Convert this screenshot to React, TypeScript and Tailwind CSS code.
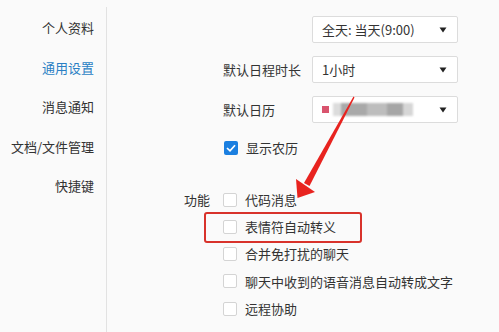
import React from 'react';

const menu = ['个人资料', '通用设置', '消息通知', '文档/文件管理', '快捷键'];
const features = ['代码消息', '表情符自动转义', '合并免打扰的聊天', '聊天中收到的语音消息自动转成文字', '远程协助'];

function Caret() {
  return (
    <svg width="8" height="6" viewBox="0 0 8 6" className="shrink-0">
      <path d="M0.5 0.5 H7.5 L4 5.5 Z" fill="#222" />
    </svg>
  );
}

function Select({ children }: { children: React.ReactNode }) {
  return (
    <div className="w-[146px] h-[27px] bg-white border border-[#dcdcdc] rounded-[2px] flex items-center justify-between pl-[9px] pr-[10px]">
      <div className="flex items-center">{children}</div>
      <Caret />
    </div>
  );
}

function Box({ checked }: { checked?: boolean }) {
  if (checked)
    return (
      <div className="w-[14px] h-[14px] rounded-[2px] bg-[#1b7fe0] flex items-center justify-center shrink-0">
        <svg width="10" height="8" viewBox="0 0 10 8">
          <path d="M1 4 L4 6.8 L9 1.2" fill="none" stroke="#fff" strokeWidth="1.7" />
        </svg>
      </div>
    );
  return <div className="w-[14px] h-[14px] rounded-[2px] bg-white border border-[#d4d4d4] shrink-0" />;
}

export default function App() {
  return (
    <div className="relative w-[499px] h-[332px] overflow-hidden bg-[#fafafa] text-[13px] text-[#333] flex" style={{ fontFamily: '"Noto Sans CJK SC", "Noto Sans", sans-serif' }}>
      <div className="w-[107px] shrink-0 mt-[7px] border-r border-[#e2e2e2] pr-[12px] flex flex-col items-end">
        {menu.map((m, i) => (
          <div key={m} className={`h-[39.5px] flex items-center ${i === 0 ? 'mt-[1px]' : ''} ${i === 1 ? 'text-[#2a7fc4]' : ''}`}>{m}</div>
        ))}
      </div>

      <div className="pl-[77px] pt-[16px] flex flex-col">
        <div className="ml-[39px] flex flex-col gap-[13px]">
          <div className="flex items-center">
            <div className="w-[89px]" />
            <Select>全天: 当天(9:00)</Select>
          </div>
          <div className="flex items-center">
            <div className="w-[89px]">默认日程时长</div>
            <Select>1小时</Select>
          </div>
          <div className="flex items-center">
            <div className="w-[89px]">默认日历</div>
            <Select>
              <span className="w-[7px] h-[7px] bg-[#d9546e] mr-[4px]" />
              <span className="flex h-[13px] blur-[1px]">
                <span className="w-[8px] bg-[#dcdcdc]" />
                <span className="w-[26px] bg-[#a9a9a9]" />
                <span className="w-[20px] bg-[#bdbdbd]" />
                <span className="w-[16px] bg-[#a6a6a6]" />
                <span className="w-[10px] bg-[#d6d6d6]" />
              </span>
            </Select>
          </div>
          <div className="flex items-center gap-[8px] mt-[5px] ml-[1px] h-[14px]">
            <Box checked />
            <span>显示农历</span>
          </div>
        </div>

        <div className="flex mt-[31px]">
          <div className="w-[39px] h-[27px] flex items-center">功能</div>
          <div className="flex flex-col">
            {features.map((f) => (
              <div key={f} className="h-[27.25px] flex items-center gap-[8px]">
                <Box />
                <span>{f}</span>
              </div>
            ))}
          </div>
        </div>
      </div>

      <div className="absolute left-[204px] top-[212px] w-[158px] h-[31px] border-2 border-[#d8322b] rounded-[3px]" />

      <svg className="absolute left-0 top-0 pointer-events-none" width="499" height="332" viewBox="0 0 499 332">
        <path d="M353.5 96.5 L354.5 97.5 L309.5 186 L304 183 Z" fill="#e8231f" />
        <path d="M296 179 L297.5 198 L315 192 Z" fill="#e8231f" />
      </svg>
    </div>
  );
}
